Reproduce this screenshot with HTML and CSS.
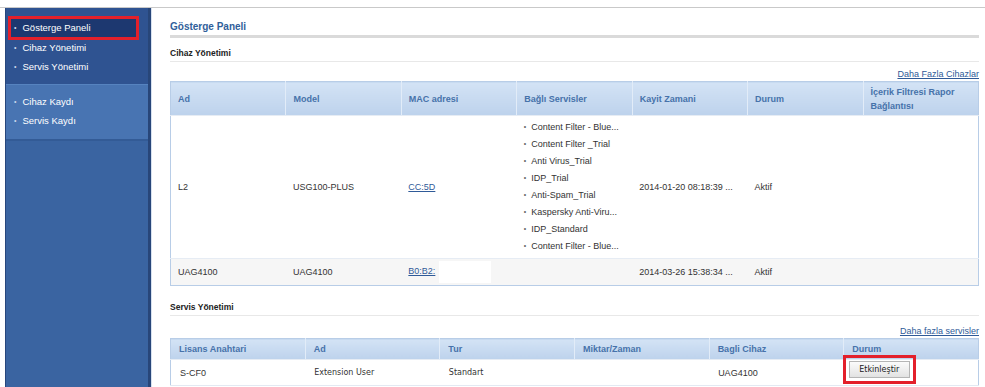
FILE: index.html
```html
<!DOCTYPE html>
<html lang="tr">
<head>
    <meta charset="UTF-8">
    <title>Gösterge Paneli</title>
    <link rel="stylesheet" href="styles.css">
</head>
<body>
    <div class="layout">
        <nav class="sidebar">
            <ul class="menu menu-top">
                <li class="active">Gösterge Paneli</li>
                <li>Cihaz Yönetimi</li>
                <li>Servis Yönetimi</li>
            </ul>
            <ul class="menu menu-mid">
                <li>Cihaz Kaydı</li>
                <li>Servis Kaydı</li>
            </ul>
            <div class="menu-rest"></div>
        </nav>

        <main class="content">
            <h1 class="page-title">Gösterge Paneli</h1>

            <h2 class="section-title">Cihaz Yönetimi</h2>
            <div class="more"><a href="#">Daha Fazla Cihazlar</a></div>
            <table class="grid devices">
                <thead>
                    <tr>
                        <th>Ad</th>
                        <th>Model</th>
                        <th>MAC adresi</th>
                        <th>Bağlı Servisler</th>
                        <th>Kayit Zamani</th>
                        <th>Durum</th>
                        <th>İçerik Filtresi Rapor Bağlantısı</th>
                    </tr>
                </thead>
                <tbody>
                    <tr>
                        <td>L2</td>
                        <td>USG100-PLUS</td>
                        <td><a href="#">CC:5D</a></td>
                        <td>
                            <ul class="services">
                                <li>Content Filter - Blue...</li>
                                <li>Content Filter _Trial</li>
                                <li>Anti Virus_Trial</li>
                                <li>IDP_Trial</li>
                                <li>Anti-Spam_Trial</li>
                                <li>Kaspersky Anti-Viru...</li>
                                <li>IDP_Standard</li>
                                <li>Content Filter - Blue...</li>
                            </ul>
                        </td>
                        <td class="nowrap">2014-01-20 08:18:39 ...</td>
                        <td>Aktif</td>
                        <td></td>
                    </tr>
                    <tr class="alt">
                        <td>UAG4100</td>
                        <td>UAG4100</td>
                        <td class="nowrap"><a href="#">B0:B2:</a><span class="mask"></span></td>
                        <td></td>
                        <td class="nowrap">2014-03-26 15:38:34 ...</td>
                        <td>Aktif</td>
                        <td></td>
                    </tr>
                </tbody>
            </table>

            <h2 class="section-title second">Servis Yönetimi</h2>
            <div class="more second"><a href="#">Daha fazla servisler</a></div>
            <table class="grid services-table">
                <thead>
                    <tr>
                        <th>Lisans Anahtari</th>
                        <th>Ad</th>
                        <th>Tur</th>
                        <th>Miktar/Zaman</th>
                        <th>Bagli Cihaz</th>
                        <th>Durum</th>
                    </tr>
                </thead>
                <tbody>
                    <tr>
                        <td>S-CF0</td>
                        <td class="alt-font">Extension User</td>
                        <td class="alt-font">Standart</td>
                        <td></td>
                        <td>UAG4100</td>
                        <td class="action"><button class="btn">Etkinleştir</button></td>
                    </tr>
                </tbody>
            </table>
        </main>
    </div>
</body>
</html>
```

FILE: styles.css
```css
body {
    margin: 0;
    font-family: "Liberation Sans", Arial, sans-serif;
    font-size: 9px;
    color: #333;
    background-color: #fff;
}

.layout {
    display: flex;
    margin-top: 7px;
    border-top: 1px solid #c9c9c9;
    min-height: calc(100vh - 8px);
}

/* sidebar */
.sidebar {
    width: 142px;
    margin-left: 5px;
    border-left: 1px solid #27467c;
    border-right: 3px solid #284679;
    box-shadow: 1px 0 0 #d7e1ef;
    display: flex;
    flex-direction: column;
    background-color: #3a64a1;
}

.menu {
    list-style: none;
    margin: 0;
    padding: 0;
}

.menu li {
    height: 19px;
    line-height: 19px;
    padding-left: 8px;
    color: #fff;
    font-size: 9.5px;
}

.menu li::before {
    content: "•";
    font-size: 7px;
    color: #c9d6ea;
    margin-right: 6px;
    vertical-align: 1px;
}

.menu-top {
    background-color: #2f5391;
    padding: 10px 0 8px;
}

.menu-top li.active {
    background-color: #1d3870;
    margin: 0 11px 0 4px;
    padding-left: 4px;
    outline: 3px solid #e3202b;
    outline-offset: -1px;
    height: 20px;
}

.menu-mid {
    background-color: #4874b2;
    border-top: 1px solid #5683bf;
    border-bottom: 2px solid #335b96;
    padding: 7px 0 9px;
}

.menu-rest {
    flex: 1;
}

/* content */
.content {
    flex: 1;
    padding: 0 6px 0 19px;
}

.page-title {
    margin: 12px 0 0;
    font-size: 10px;
    line-height: 14px;
    color: #30609a;
    padding-bottom: 1px;
    border-bottom: 3px solid #dadada;
}

.section-title {
    margin: 8px 0 0;
    font-size: 8.5px;
    line-height: 14px;
    color: #222;
    padding-bottom: 1px;
    border-bottom: 1px solid #e8e8e8;
}

.section-title.second {
    margin-top: 14px;
}

.more {
    text-align: right;
    line-height: 14px;
    margin-top: 5px;
}

.more.second {
    margin-top: 8px;
}

.more a {
    color: #2f5a98;
}

.grid {
    width: 100%;
    border-collapse: collapse;
    table-layout: fixed;
    border: 1px solid #b8cde7;
}

.grid th {
    background: linear-gradient(#d3e3f5, #bdd2ec);
    color: #4672aa;
    text-align: left;
    font-size: 9px;
    font-weight: bold;
    padding: 0 7px;
    border-left: 1px solid #e2ecf8;
    vertical-align: middle;
}

.grid th:first-child {
    border-left: none;
}

.grid td {
    padding: 0 7px;
    vertical-align: middle;
    border-top: 1px solid #e6ecf4;
}

.grid a {
    color: #2f5a98;
}

.nowrap {
    white-space: nowrap;
}

.devices thead tr {
    height: 34px;
}

.devices th {
    line-height: 14px;
}

.devices tbody tr {
    height: 27px;
}

.devices tr.alt td {
    background-color: #f6f6f6;
}

.mask {
    display: inline-block;
    width: 52px;
    height: 22px;
    margin-left: 4px;
    background-color: #fff;
    vertical-align: middle;
}

.services {
    list-style: none;
    margin: 0;
    padding: 3px 0;
}

.services li {
    height: 17px;
    line-height: 17px;
    white-space: nowrap;
}

.services li::before {
    content: "•";
    font-size: 7px;
    line-height: 1;
    color: #666;
    margin-right: 5px;
    vertical-align: 1px;
}

.services-table thead tr {
    height: 21px;
}

.services-table th {
    padding-left: 8px;
}

.services-table tbody tr {
    height: 26px;
}

.services-table td {
    padding-left: 9px;
    border-bottom: 1px solid #e3e9f2;
}

.alt-font {
    font-family: "DejaVu Sans", Verdana, sans-serif;
    font-size: 8px;
}

.services-table td.action {
    vertical-align: top;
    padding: 1px 0 0 5px;
}

.btn {
    font-family: "DejaVu Sans", Verdana, sans-serif;
    font-size: 8px;
    color: #222;
    height: 17px;
    width: 61px;
    padding: 0;
    background: linear-gradient(#fbfbfb, #e2e2e2);
    border: 1px solid #b5b5b5;
    border-radius: 0;
    outline: 3px solid #e3202b;
    outline-offset: 3px;
}
```
